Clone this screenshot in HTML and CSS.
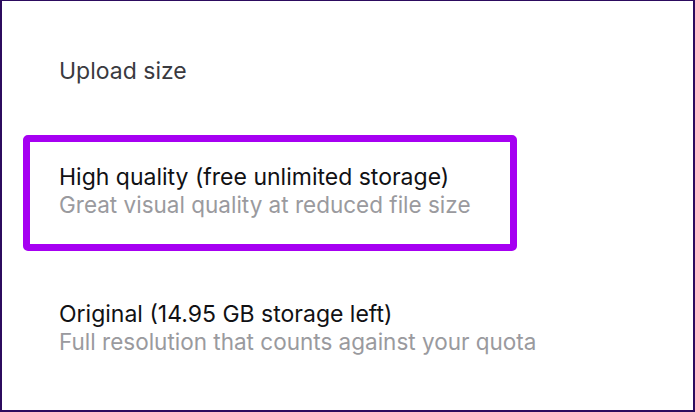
FILE: index.html
```html
<!DOCTYPE html>
<html lang="en">
<head>
<meta charset="utf-8">
<link rel="stylesheet" href="styles.css">
</head>
<body>
<div class="screen">
  <div class="heading">Upload size</div>
  <div class="option selected">
    <div class="title">High quality (free unlimited storage)</div>
    <div class="subtitle">Great visual quality at reduced file size</div>
  </div>
  <div class="option">
    <div class="title">Original (14.95 GB storage left)</div>
    <div class="subtitle">Full resolution that counts against your quota</div>
  </div>
</div>
</body>
</html>
```

FILE: styles.css
```css
html, body {
  margin: 0;
  padding: 0;
  background: #ffffff;
}
.screen {
  box-sizing: border-box;
  width: 695px;
  height: 412px;
  border: 2px solid #2c0b5e;
  border-top-width: 1px;
  font-family: Inter, "Noto Sans", sans-serif;
  line-height: 27px;
  display: flex;
  flex-direction: column;
  padding-top: 57px;
}
.heading {
  padding-left: 57px;
  color: #3a3a3f;
  font-size: 23px;
}
.option {
  margin-left: 21px;
  width: 494px;
  box-sizing: border-box;
  padding: 22px 0 26px 29px;
  border: 7px solid transparent;
  border-radius: 5px;
  white-space: nowrap;
}
.heading + .option {
  margin-top: 50px;
}
.option + .option {
  margin-top: 0;
  padding-top: 43px;
}
.selected {
  border-color: #a600f2;
}
.title {
  color: #111114;
  font-size: 23px;
}
.subtitle {
  color: #9a9a9e;
  font-size: 22.5px;
}
```
